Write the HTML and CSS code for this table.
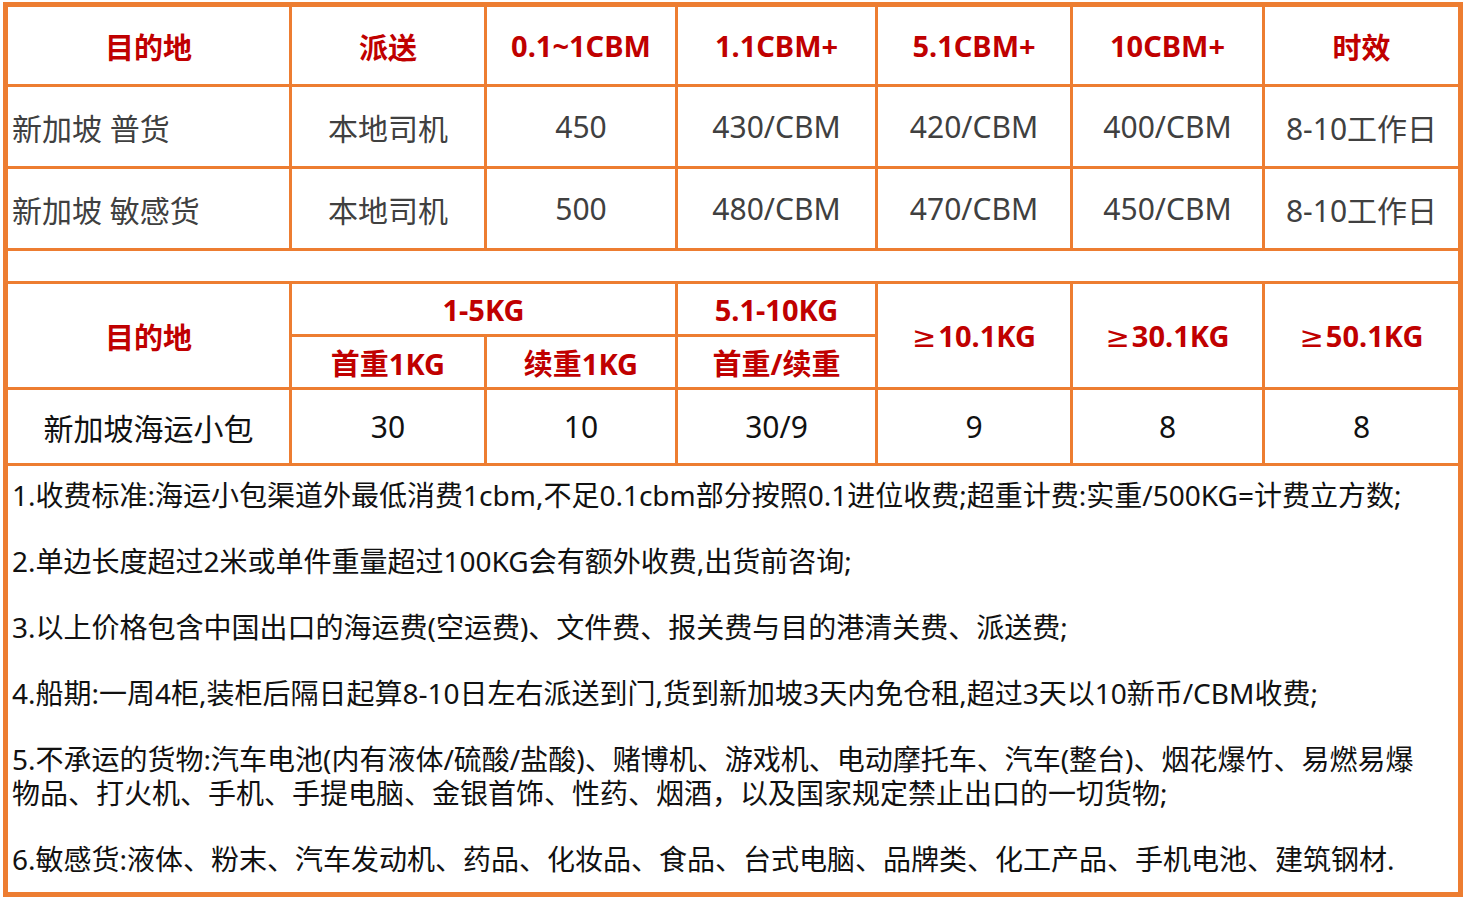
FILE: index.html
```html
<!DOCTYPE html>
<html lang="zh-CN">
<head>
<meta charset="utf-8">
<title>新加坡 价格表</title>
<link rel="stylesheet" href="styles.css">
</head>
<body>
<table class="price">
  <colgroup>
    <col class="c1"><col class="c2"><col class="c3"><col class="c4"><col class="c5"><col class="c6"><col class="c7">
  </colgroup>
  <tbody>
    <tr class="r-head">
      <th>目的地</th><th>派送</th><th>0.1~1CBM</th><th>1.1CBM+</th><th>5.1CBM+</th><th>10CBM+</th><th>时效</th>
    </tr>
    <tr class="r-data grey">
      <td class="left">新加坡 普货</td><td>本地司机</td><td>450</td><td>430/CBM</td><td>420/CBM</td><td>400/CBM</td><td>8-10工作日</td>
    </tr>
    <tr class="r-data grey">
      <td class="left">新加坡 敏感货</td><td>本地司机</td><td>500</td><td>480/CBM</td><td>470/CBM</td><td>450/CBM</td><td>8-10工作日</td>
    </tr>
    <tr class="r-gap"><td colspan="7"></td></tr>
    <tr class="r-sub1">
      <th rowspan="2">目的地</th><th colspan="2">1-5KG</th><th>5.1-10KG</th><th rowspan="2"><span class="ge">≥</span>10.1KG</th><th rowspan="2"><span class="ge">≥</span>30.1KG</th><th rowspan="2"><span class="ge">≥</span>50.1KG</th>
    </tr>
    <tr class="r-sub2">
      <th>首重1KG</th><th>续重1KG</th><th>首重/续重</th>
    </tr>
    <tr class="r-data2">
      <td>新加坡海运小包</td><td>30</td><td>10</td><td>30/9</td><td>9</td><td>8</td><td>8</td>
    </tr>
    <tr class="r-notes">
      <td colspan="7" class="notes">
        <p>1.收费标准:海运小包渠道外最低消费1cbm,不足0.1cbm部分按照0.1进位收费;超重计费:实重/500KG=计费立方数;</p>
        <p>2.单边长度超过2米或单件重量超过100KG会有额外收费,出货前咨询;</p>
        <p>3.以上价格包含中国出口的海运费(空运费)、文件费、报关费与目的港清关费、派送费;</p>
        <p>4.船期:一周4柜,装柜后隔日起算8-10日左右派送到门,货到新加坡3天内免仓租,超过3天以10新币/CBM收费;</p>
        <p>5.不承运的货物:汽车电池(内有液体/硫酸/盐酸)、赌博机、游戏机、电动摩托车、汽车(整台)、烟花爆竹、易燃易爆<br>物品、打火机、手机、手提电脑、金银首饰、性药、烟酒，以及国家规定禁止出口的一切货物;</p>
        <p>6.敏感货:液体、粉末、汽车发动机、药品、化妆品、食品、台式电脑、品牌类、化工产品、手机电池、建筑钢材.</p>
      </td>
    </tr>
  </tbody>
</table>
</body>
</html>
```

FILE: styles.css
```css
html, body {
  margin: 0;
  padding: 0;
  background: #ffffff;
}
body {
  padding: 2px 0 0 3px;
  font-family: "Noto Sans", "Noto Sans CJK SC", sans-serif;
}
.price {
  border-collapse: collapse;
  table-layout: fixed;
  width: 1459px;
  border: 5px solid #ED7D31;
}
.c1 { width: 285px; }
.c2 { width: 195px; }
.c3 { width: 191px; }
.c4 { width: 200px; }
.c5 { width: 195px; }
.c6 { width: 192px; }
.c7 { width: 197px; }
.price th, .price td {
  border: 3px solid #ED7D31;
  padding: 0;
  text-align: center;
  vertical-align: middle;
  white-space: nowrap;
}
.price th {
  color: #C00000;
  font-weight: bold;
  font-size: 29px;
}
.ge {
  font-family: "DejaVu Sans", sans-serif;
  font-weight: normal;
  font-size: 29px;
  margin-right: 2px;
}
.r-head { height: 81px; }
.r-data { height: 82px; }
.r-data td {
  font-size: 30px;
  color: #404040;
}
.price td.left {
  text-align: left;
  padding-left: 4px;
}
.r-gap { height: 33px; }
.r-sub1 { height: 53px; }
.r-sub2 { height: 53px; }
.r-data2 { height: 76px; }
.r-data2 td {
  font-size: 30px;
  color: #111111;
}
.price td.notes {
  text-align: left;
  vertical-align: top;
  padding: 12px 4px 0 4px;
  height: 414px;
  font-size: 28px;
  color: #111111;
  line-height: 34px;
}
.notes p {
  margin: 0;
}
.notes p + p {
  margin-top: 32px;
}
```
